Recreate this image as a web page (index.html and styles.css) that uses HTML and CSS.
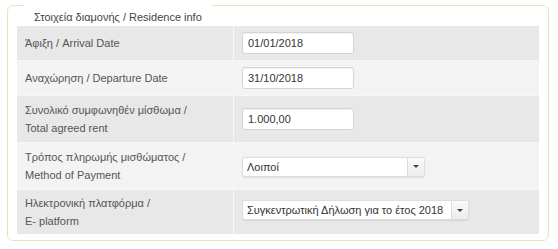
FILE: index.html
```
<!DOCTYPE html>
<html lang="el">

<head>
    <meta charset="UTF-8">
    <meta name="viewport" content="width=device-width, initial-scale=1.0">
    <title>Residence info</title>
    <link rel="stylesheet" href="styles.css">
</head>

<body>
    <div class="residence">
        <div class="legend">Στοιχεία διαμονής / Residence info</div>
        <table class="info">
            <tr class="short">
                <td class="label">Άφιξη / Arrival Date</td>
                <td><input class="field" type="text" value="01/01/2018"></td>
            </tr>
            <tr class="short even">
                <td class="label">Αναχώρηση / Departure Date</td>
                <td><input class="field" type="text" value="31/10/2018"></td>
            </tr>
            <tr class="tall">
                <td class="label">Συνολικό συμφωνηθέν μίσθωμα /<br>Total agreed rent</td>
                <td><input class="field" type="text" value="1.000,00"></td>
            </tr>
            <tr class="tall even">
                <td class="label">Τρόπος πληρωμής μισθώματος /<br>Method of Payment</td>
                <td>
                    <div class="select pay">
                        <span class="value">Λοιποί</span>
                        <span class="arrow"></span>
                    </div>
                </td>
            </tr>
            <tr class="tall last">
                <td class="label">Ηλεκτρονική πλατφόρμα /<br>E- platform</td>
                <td>
                    <div class="select platform">
                        <span class="value">Συγκεντρωτική Δήλωση για το έτος 2018</span>
                        <span class="arrow"></span>
                    </div>
                </td>
            </tr>
        </table>
    </div>
</body>

</html>
```

FILE: styles.css
```
body {
    margin: 0;
    background: #fff;
    font-family: "Liberation Sans", Arial, sans-serif;
}

.residence {
    margin: 5px 9px 0 7px;
    border: 1px solid #dce9bd;
    border-radius: 6px;
    padding: 0 8px 6px 9px;
}

.legend {
    width: fit-content;
    margin: -1px 0 0 7px;
    padding: 4px 10px 0;
    background: #fff;
    font-size: 11px;
    line-height: 16px;
    color: #444;
}

.info {
    width: 522px;
    margin-top: 1px;
    border-collapse: collapse;
}

.info td {
    padding: 0 8px;
    vertical-align: middle;
    background: #e8e8e8;
    border-top: 1px solid #f7f7f7;
}

.info tr:first-child td {
    border-top: none;
}

.info td:first-child {
    width: 200px;
    border-right: 1px solid #f7f7f7;
}

.info .even td {
    background: #f3f3f3;
}

.short td {
    height: 34px;
}

.tall td {
    height: 46px;
}

.last td {
    height: 44px;
}

.label {
    font-size: 11px;
    line-height: 18px;
    color: #555;
}

.field {
    box-sizing: border-box;
    width: 112px;
    height: 22px;
    margin: 0;
    padding: 0 5px;
    border: 1px solid #d4d4d4;
    border-radius: 3px;
    box-shadow: inset 0 1px 1px rgba(0, 0, 0, 0.06);
    font-family: "Liberation Sans", Arial, sans-serif;
    font-size: 11px;
    color: #333;
    background: #fff;
}

.select {
    box-sizing: border-box;
    display: flex;
    height: 20px;
    border: 1px solid #ddd;
    border-radius: 3px;
    background: #fff;
    box-shadow: 0 1px 1px rgba(0, 0, 0, 0.08);
    font-size: 11px;
    color: #333;
}

.pay {
    width: 183px;
    margin-top: 1px;
}

.platform {
    width: 227px;
    margin-top: -4px;
}

.value {
    flex: 1;
    padding-left: 4px;
    line-height: 18px;
    white-space: nowrap;
    overflow: hidden;
}

.arrow {
    width: 16px;
    border-left: 1px solid #ddd;
    background: linear-gradient(#fafafa, #ececec);
    border-radius: 0 2px 2px 0;
    display: flex;
    align-items: center;
    justify-content: center;
}

.arrow::after {
    content: "";
    border-left: 3px solid transparent;
    border-right: 3px solid transparent;
    border-top: 3px solid #444;
}
```
